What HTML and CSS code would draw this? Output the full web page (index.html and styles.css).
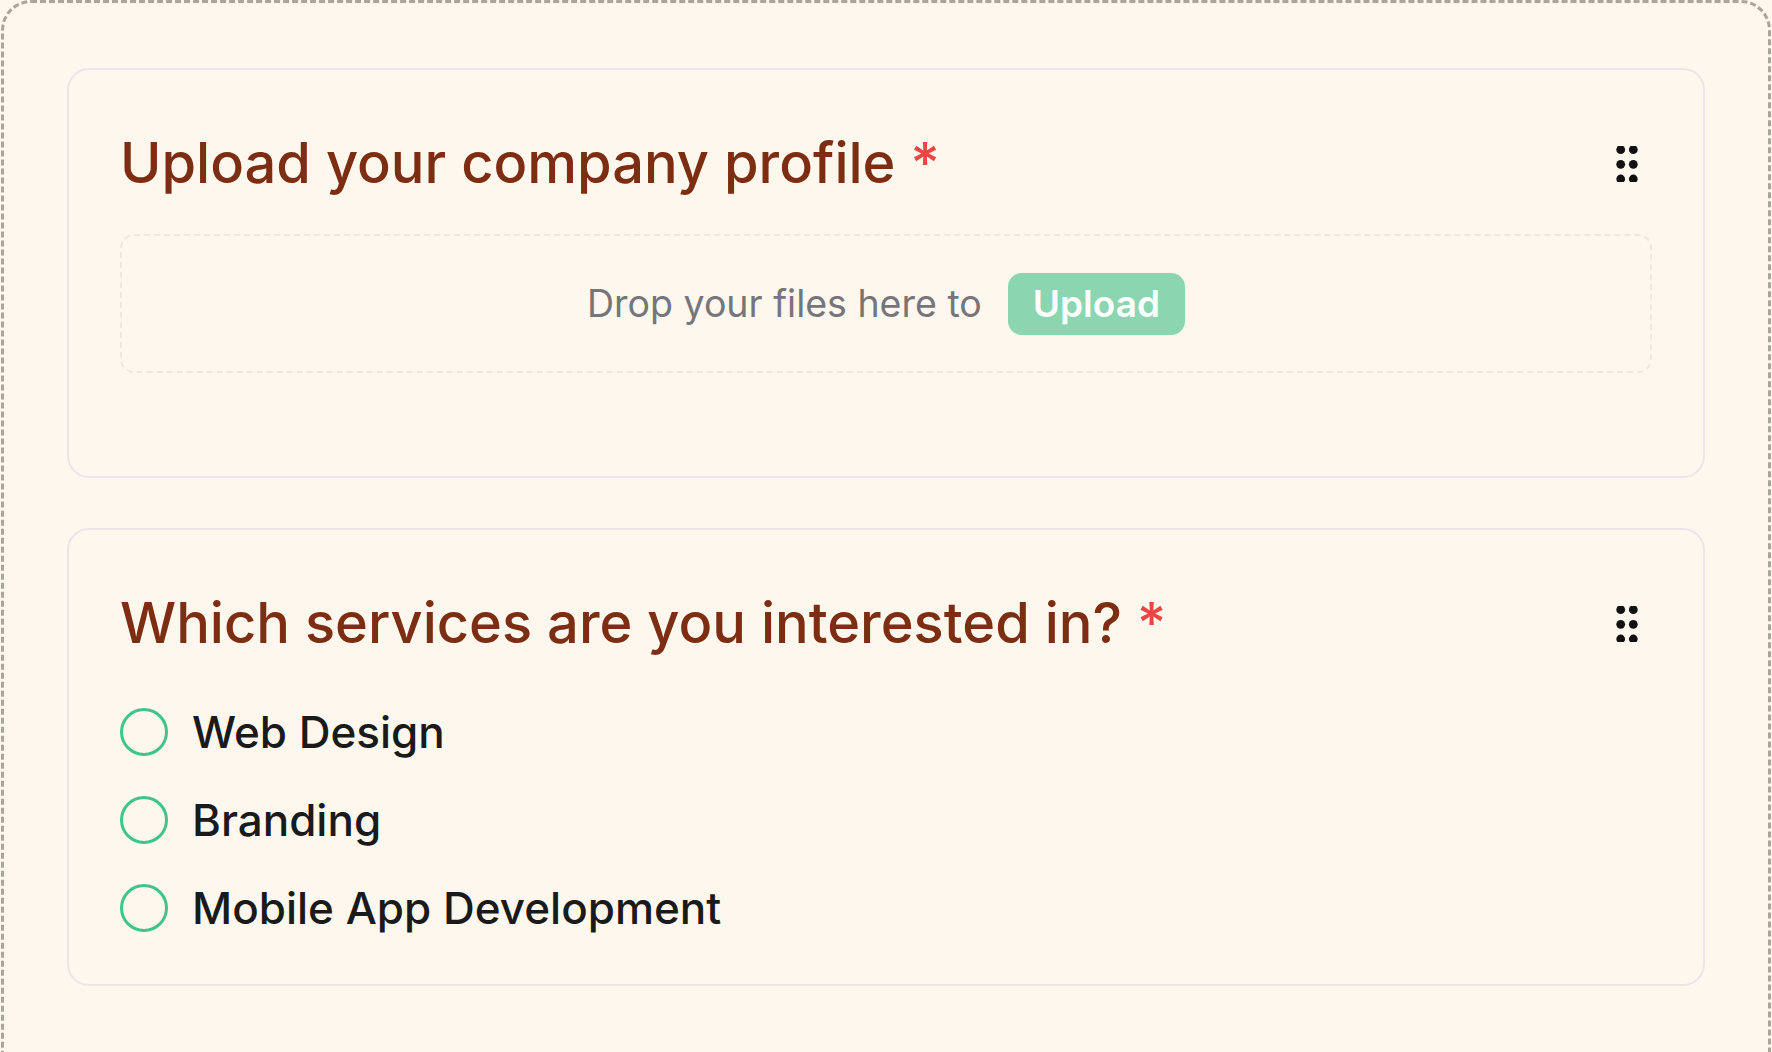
FILE: index.html
```html
<!DOCTYPE html>
<html lang="en">
<head>
    <meta charset="UTF-8">
    <meta name="viewport" content="width=device-width, initial-scale=1.0">
    <title>Form Builder</title>
    <link rel="stylesheet" href="styles.css">
</head>
<body>

    <div class="canvas">

        <div class="card">
            <div class="card-head">
                <h2 class="question">Upload your company profile <span class="required">*</span></h2>
                <svg class="handle" width="24" height="36" viewBox="0 0 24 36">
                    <circle cx="5.7" cy="3.7" r="4.4"/>
                    <circle cx="18.3" cy="3.7" r="4.4"/>
                    <circle cx="5.7" cy="18.3" r="4.4"/>
                    <circle cx="18.3" cy="18.3" r="4.4"/>
                    <circle cx="5.7" cy="33" r="4.4"/>
                    <circle cx="18.3" cy="33" r="4.4"/>
                </svg>
            </div>
            <div class="dropzone">
                <span class="drop-text">Drop your files here to</span>
                <button class="upload-button">Upload</button>
            </div>
        </div>

        <div class="card">
            <div class="card-head">
                <h2 class="question">Which services are you interested in? <span class="required">*</span></h2>
                <svg class="handle" width="24" height="36" viewBox="0 0 24 36">
                    <circle cx="5.7" cy="3.7" r="4.4"/>
                    <circle cx="18.3" cy="3.7" r="4.4"/>
                    <circle cx="5.7" cy="18.3" r="4.4"/>
                    <circle cx="18.3" cy="18.3" r="4.4"/>
                    <circle cx="5.7" cy="33" r="4.4"/>
                    <circle cx="18.3" cy="33" r="4.4"/>
                </svg>
            </div>
            <div class="options">
                <label class="option"><span class="radio"></span>Web Design</label>
                <label class="option"><span class="radio"></span>Branding</label>
                <label class="option"><span class="radio"></span>Mobile App Development</label>
            </div>
        </div>

    </div>

</body>
</html>
```

FILE: styles.css
```css
body {
    font-family: Inter, "Noto Sans", sans-serif;
    background-color: #fdf7ed;
    margin: 0;
    padding: 0;
    color: #1a1a1a;
}
.canvas {
    box-sizing: border-box;
    margin: 0 1px;
    min-height: 1100px;
    padding: 65px 63px;
    border: 3px dashed #aaa49d;
    border-radius: 30px;
    display: flex;
    flex-direction: column;
    gap: 50px;
}
.card {
    border: 2px solid #ebe5ea;
    border-radius: 22px;
    padding: 60px 51px 50px;
}
.card-head {
    display: flex;
    align-items: center;
    justify-content: space-between;
}
.question {
    margin: 0;
    font-size: 56px;
    font-weight: 500;
    line-height: 67px;
    color: #7c2d12;
}
.required {
    color: #ef4444;
}
.handle {
    fill: #111;
    margin-right: 13px;
}
.dropzone {
    margin-top: 37px;
    margin-bottom: 53px;
    height: 139px;
    box-sizing: border-box;
    border: 2px dashed #efe8e1;
    border-radius: 14px;
    display: flex;
    align-items: center;
    justify-content: center;
    gap: 26px;
}
.drop-text {
    font-size: 37.5px;
    color: #75757b;
}
.upload-button {
    font-family: inherit;
    font-size: 37px;
    font-weight: 600;
    color: #fff;
    background-color: #8bd6b0;
    border: none;
    border-radius: 14px;
    height: 62px;
    padding: 0 25px;
}
.options {
    margin-top: 49px;
    display: flex;
    flex-direction: column;
    gap: 36px;
}
.option {
    display: flex;
    align-items: center;
    gap: 24px;
    font-size: 44px;
    font-weight: 500;
    line-height: 52px;
}
.radio {
    width: 48px;
    height: 48px;
    box-sizing: border-box;
    border: 3px solid #3fc48e;
    border-radius: 50%;
}
```
